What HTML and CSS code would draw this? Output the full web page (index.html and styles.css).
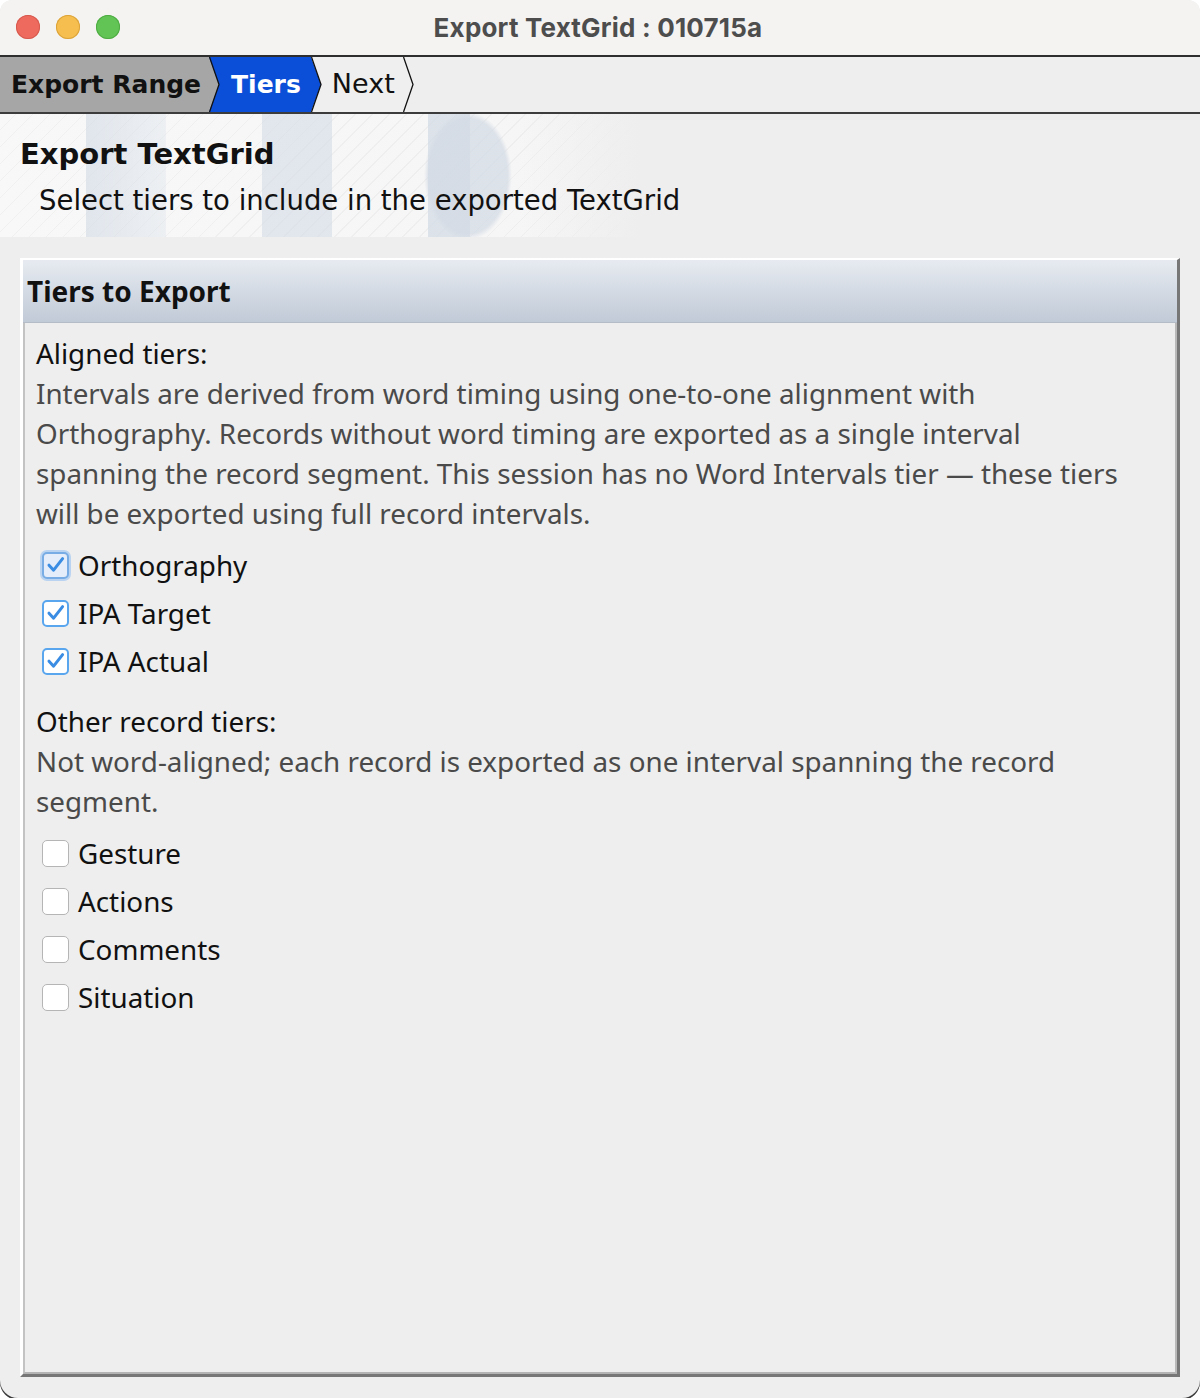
FILE: index.html
```html
<!DOCTYPE html>
<html lang="en">
<head>
<meta charset="utf-8">
<title>Export TextGrid : 010715a</title>
<link rel="stylesheet" href="styles.css">
</head>
<body>
<div class="window">
  <header class="titlebar">
    <div class="lights">
      <span class="light light-close"></span>
      <span class="light light-min"></span>
      <span class="light light-zoom"></span>
    </div>
    <div class="title">Export TextGrid : 010715a</div>
    <div></div>
  </header>

  <nav class="crumbs">
    <div class="crumb crumb-done">Export Range</div>
    <svg class="sep" viewBox="0 0 11 55" preserveAspectRatio="none">
      <rect width="11" height="55" fill="#0b4fd8"/>
      <polygon points="0,0 10,27.5 0,55" fill="#a6a6a6"/>
      <polyline points="0.5,0 10,27.5 0.5,55" fill="none" stroke="#111" stroke-width="1.3"/>
    </svg>
    <div class="crumb crumb-current">Tiers</div>
    <svg class="sep" viewBox="0 0 11 55" preserveAspectRatio="none">
      <rect width="11" height="55" fill="#efefef"/>
      <polygon points="0,0 10,27.5 0,55" fill="#0b4fd8"/>
      <polyline points="0.5,0 10,27.5 0.5,55" fill="none" stroke="#111" stroke-width="1.3"/>
    </svg>
    <div class="crumb crumb-next">Next</div>
    <svg class="sep" viewBox="0 0 11 55" preserveAspectRatio="none">
      <rect width="11" height="55" fill="#eeeeee"/>
      <polygon points="0,0 10,27.5 0,55" fill="#efefef"/>
      <polyline points="0.5,0 10,27.5 0.5,55" fill="none" stroke="#111" stroke-width="1.3"/>
    </svg>
  </nav>

  <section class="banner">
    <h1 class="banner-title">Export TextGrid</h1>
    <p class="banner-sub">Select tiers to include in the exported TextGrid</p>
  </section>

  <section class="panel">
    <div class="panel-head">Tiers to Export</div>
    <div class="panel-body">
      <div class="group-title">Aligned tiers:</div>
      <p class="group-desc">Intervals are derived from word timing using one-to-one alignment with Orthography. Records without word timing are exported as a single interval spanning the record segment. This session has no Word Intervals tier — these tiers will be exported using full record intervals.</p>
      <ul class="tier-list">
        <li class="tier">
          <span class="box box-on box-focus"><svg viewBox="0 0 26 26"><path d="M6 13.2 L10.6 18.2 L19.6 6.6"/></svg></span>
          <span class="tier-label">Orthography</span>
        </li>
        <li class="tier">
          <span class="box box-on"><svg viewBox="0 0 26 26"><path d="M6 13.2 L10.6 18.2 L19.6 6.6"/></svg></span>
          <span class="tier-label">IPA Target</span>
        </li>
        <li class="tier">
          <span class="box box-on"><svg viewBox="0 0 26 26"><path d="M6 13.2 L10.6 18.2 L19.6 6.6"/></svg></span>
          <span class="tier-label">IPA Actual</span>
        </li>
      </ul>

      <div class="group-title group-gap">Other record tiers:</div>
      <p class="group-desc">Not word-aligned; each record is exported as one interval spanning the record segment.</p>
      <ul class="tier-list">
        <li class="tier"><span class="box"></span><span class="tier-label">Gesture</span></li>
        <li class="tier"><span class="box"></span><span class="tier-label">Actions</span></li>
        <li class="tier"><span class="box"></span><span class="tier-label">Comments</span></li>
        <li class="tier"><span class="box"></span><span class="tier-label">Situation</span></li>
      </ul>
    </div>
  </section>
</div>
</body>
</html>
```

FILE: styles.css
```css
* {
  box-sizing: border-box;
}

html,
body {
  margin: 0;
  background: #ffffff;
}

body {
  font-family: "Noto Sans", "DejaVu Sans", sans-serif;
  color: #111;
}

/* window frame */
.window {
  width: 1200px;
  height: 1398px;
  background: #eeeeee;
  border-radius: 12px 12px 18px 18px;
  box-shadow: 0 2px 0 #3a3a3a;
  display: flex;
  flex-direction: column;
  overflow: hidden;
}

/* title bar */
.titlebar {
  height: 57px;
  flex: none;
  background: #f4f3f2;
  border-bottom: 2px solid #2e2e2e;
  display: grid;
  grid-template-columns: 1fr auto 1fr;
  align-items: center;
}

.lights {
  display: flex;
  gap: 16px;
  padding-left: 16px;
  padding-bottom: 1px;
}

.light {
  width: 24px;
  height: 24px;
  border-radius: 50%;
  display: block;
}

.light-close {
  background: #ee6a5f;
  box-shadow: inset 0 0 0 1px #d65a4f;
}

.light-min {
  background: #f5be4f;
  box-shadow: inset 0 0 0 1px #dba33a;
}

.light-zoom {
  background: #61c454;
  box-shadow: inset 0 0 0 1px #4fab43;
}

.title {
  font-family: Inter, "Liberation Sans", sans-serif;
  font-weight: 700;
  font-size: 26px;
  letter-spacing: 0.2px;
  color: #4d4d4d;
  padding-bottom: 1px;
  margin-right: 4px;
}

/* breadcrumb wizard steps */
.crumbs {
  height: 57px;
  flex: none;
  display: flex;
  background: #eeeeee;
  border-bottom: 2px solid #3c3c3c;
}

.crumb {
  display: flex;
  align-items: center;
  font-family: "DejaVu Sans", sans-serif;
  font-size: 25px;
}

.crumb-done {
  background: #a6a6a6;
  color: #111;
  font-weight: bold;
  padding-left: 11px;
  padding-right: 8px;
}

.crumb-current {
  background: #0b4fd8;
  color: #fff;
  font-weight: bold;
  padding-left: 11px;
  padding-right: 10px;
}

.crumb-next {
  background: #efefef;
  color: #111;
  font-size: 27px;
  padding-left: 10px;
  padding-right: 8px;
  padding-bottom: 2px;
}

.sep {
  width: 11px;
  height: 55px;
  flex: none;
  display: block;
}

/* page banner */
.banner {
  height: 123px;
  flex: none;
  padding: 22px 0 0 20px;
  background:
    linear-gradient(to right, rgba(238, 238, 238, 0) 0, rgba(238, 238, 238, 0) 520px, #eeeeee 640px),
    radial-gradient(44px 64px at 468px 62px, rgba(210, 218, 228, 0.7) 0, rgba(210, 218, 228, 0.7) 90%, rgba(210, 218, 228, 0) 100%),
    linear-gradient(rgba(210, 218, 228, 0.7), rgba(210, 218, 228, 0.7)) 428px 0 / 42px 100% no-repeat,
    linear-gradient(rgba(212, 220, 230, 0.6), rgba(212, 220, 230, 0.6)) 262px 0 / 70px 100% no-repeat,
    linear-gradient(to right, rgba(212, 220, 230, 0.65), rgba(218, 225, 234, 0.35)) 86px 0 / 80px 100% no-repeat,
    repeating-linear-gradient(135deg, rgba(0, 0, 0, 0) 0, rgba(0, 0, 0, 0) 11px, rgba(0, 0, 0, 0.03) 11px, rgba(0, 0, 0, 0.03) 12px),
    linear-gradient(to right, #f8f8f8, #f3f3f3);
}

.banner-title {
  margin: 0;
  font-family: "DejaVu Sans", sans-serif;
  font-weight: bold;
  font-size: 29px;
  line-height: 36px;
  color: #111;
}

.banner-sub {
  margin: 11px 0 0 19px;
  font-family: "DejaVu Sans", sans-serif;
  font-size: 27.5px;
  line-height: 34px;
  color: #111;
}

/* titled panel */
.panel {
  flex: 1;
  margin: 21px 20px 21px 20px;
  border-style: solid;
  border-width: 2px 3px 3px 3px;
  border-color: #ffffff #777777 #777777 #ffffff;
  display: flex;
  flex-direction: column;
}

.panel-head {
  height: 63px;
  flex: none;
  display: flex;
  align-items: center;
  padding-left: 4px;
  font-weight: bold;
  font-size: 28px;
  color: #111;
  background: linear-gradient(#e7ebf1, #c1cad7);
  border-bottom: 1px solid #b4bcc8;
}

.panel-body {
  flex: 1;
  border-style: solid;
  border-width: 0 2px 2px 2px;
  border-color: #b9b9b9 #b9b9b9 #b4b4b4 #c3c3c3;
  padding: 10px 34px 0 11px;
}

.group-title {
  font-size: 27.8px;
  line-height: 40px;
  color: #111;
}

.group-gap {
  margin-top: 16px;
}

.group-desc {
  margin: 0;
  font-size: 27.8px;
  line-height: 40px;
  color: #4a4a4a;
}

.tier-list {
  list-style: none;
  margin: 8px 0 0 0;
  padding: 0;
}

.tier {
  height: 48px;
  display: flex;
  align-items: center;
  gap: 9px;
  padding-left: 6px;
}

.tier-label {
  font-size: 27.8px;
  color: #111;
}

/* checkboxes */
.box {
  width: 27px;
  height: 27px;
  flex: none;
  border-radius: 5px;
  background: #ffffff;
  border: 1.5px solid #b5b5b5;
  display: flex;
  align-items: center;
  justify-content: center;
}

.box svg {
  width: 26px;
  height: 26px;
  flex: none;
}

.box path {
  fill: none;
  stroke: #3b8de3;
  stroke-width: 3;
  stroke-linecap: round;
  stroke-linejoin: round;
}

.box-on {
  border: 2px solid #5aa6ee;
}

.box-focus {
  background: #e4edf9;
  border-color: #78ace4;
  box-shadow: 0 0 0 2px #b9d3f1;
}
```
